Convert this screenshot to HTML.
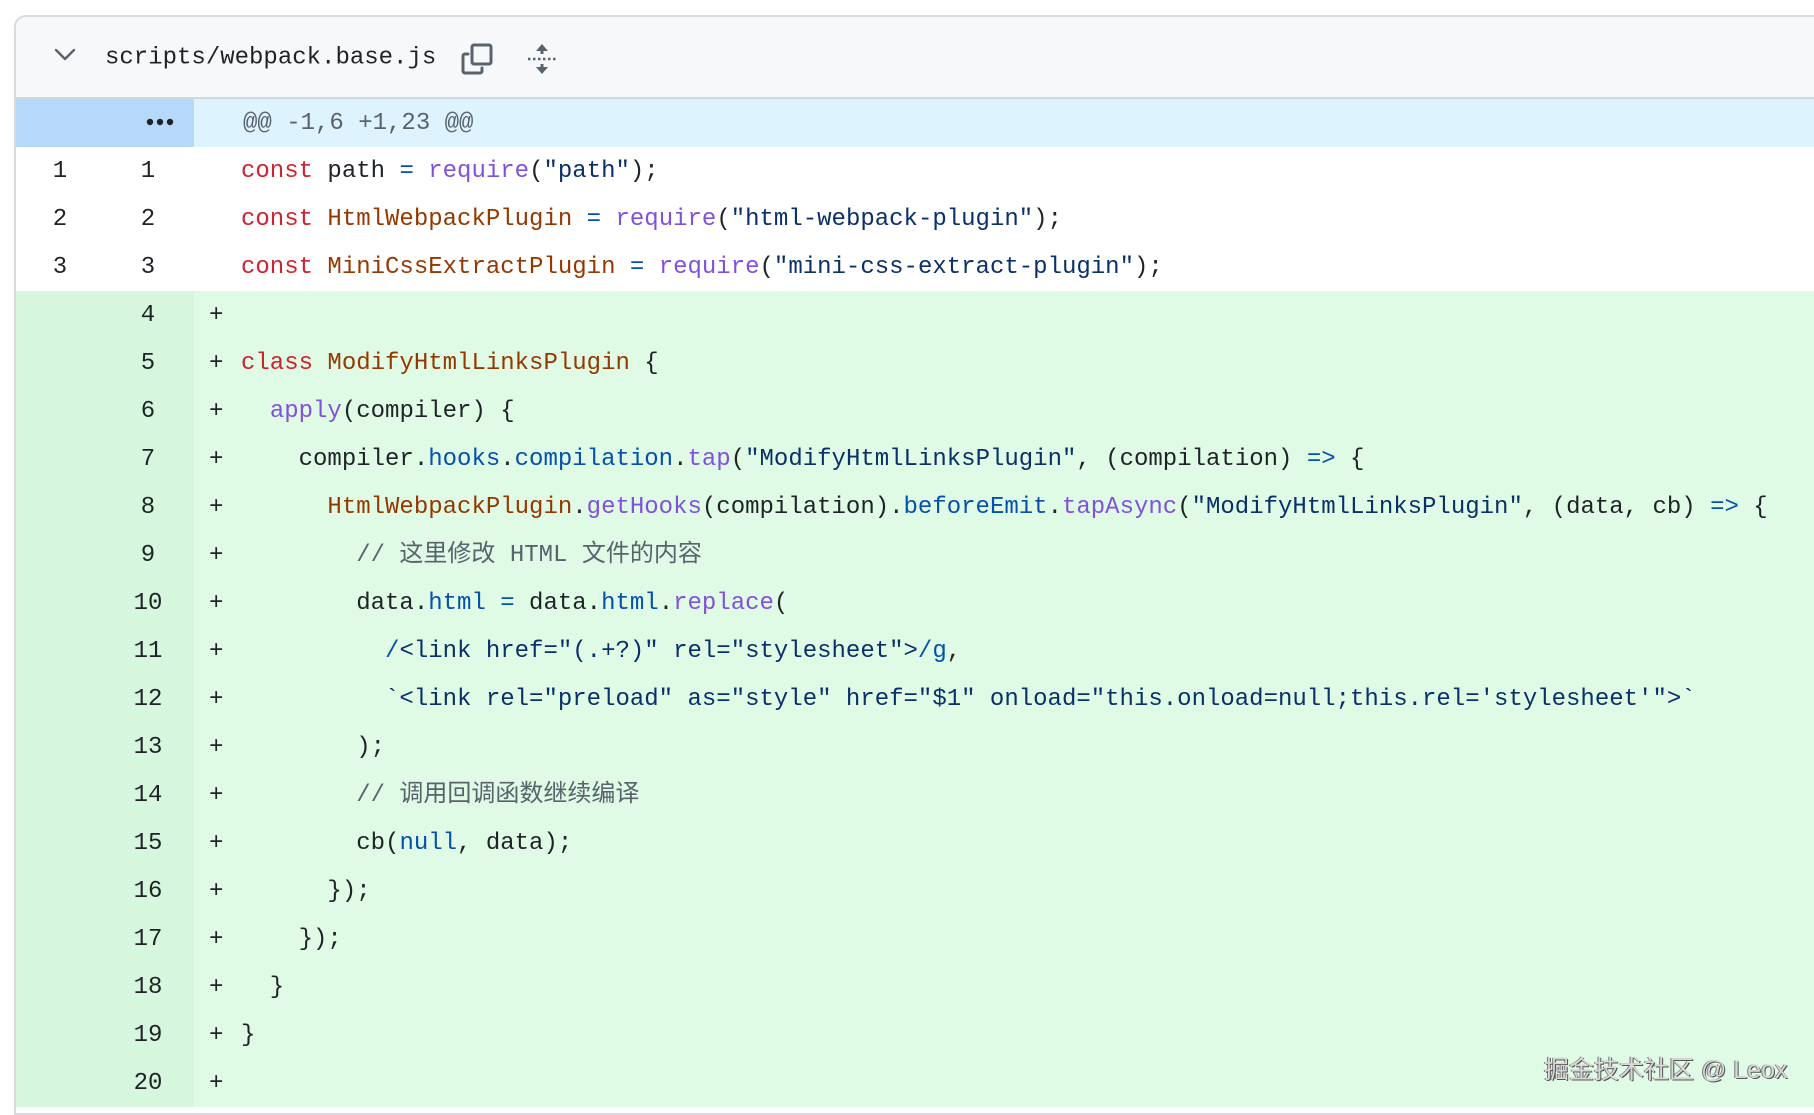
<!DOCTYPE html>
<html><head><meta charset="utf-8"><style>
*{margin:0;padding:0;box-sizing:border-box}
body{width:1814px;height:1110px;background:#fff;position:relative;overflow:hidden;font-family:"Liberation Mono","Noto Sans CJK SC",monospace;color:#1f2328}
.card{position:absolute;left:14px;top:15px;width:1820px;height:1100px;border:2px solid #d8dadd;border-radius:12px 0 0 0;overflow:hidden;background:#fff}
.hdr{position:absolute;left:0;top:0;right:0;height:82px;background:#f6f8fa;border-bottom:2px solid #d0d7de}
.fn{position:absolute;left:89px;top:41px;transform:translateY(-50%);font-size:24px;color:#1f2328;white-space:pre}
.row{position:absolute;left:0;right:0;height:48px;font-size:24px;line-height:50px;white-space:pre}
.g1,.g2{position:absolute;top:0;height:48px;text-align:center;color:#1f2328}
.g1{left:0;width:88px}
.g2{left:78px;width:108px}
.add .g2{left:78px;width:108px}
.code{position:absolute;left:178px;top:0;right:0;height:48px;padding-left:47px}
.pl{position:absolute;left:193px;top:0}
.add{background:#dffbe5}
.add .g1{background:#d6f7dd;width:78px}
.add .g2{background:#d6f7dd;width:100px}
.add .g2 span{position:relative;left:4px}
.k{color:#cf222e}.c{color:#953800}.f{color:#8250df}.p{color:#0550ae}.s{color:#0a3069}.m{color:#59636e}
.wm{position:absolute;left:1544px;top:1050px;font-family:"Liberation Sans","Noto Sans CJK SC",sans-serif;font-size:25px;color:#d8d8d8;text-shadow:1px 1px 0 #555,-1px 0 0 #777;white-space:pre}
</style></head><body>
<div class="card">
<div class="hdr">
<svg style="position:absolute;left:38px;top:30px" width="22" height="16" viewBox="0 0 22 16"><path d="M2 3l9 9 9-9" fill="none" stroke="#59636e" stroke-width="2.4" stroke-linecap="round" stroke-linejoin="round"/></svg>
<div class="fn">scripts/webpack.base.js</div>
<svg style="position:absolute;left:444px;top:25px" width="34" height="34" viewBox="0 0 34 34"><path d="M8 12H5a2 2 0 0 0-2 2v15a2 2 0 0 0 2 2h15a2 2 0 0 0 2-2v-3" fill="none" stroke="#59636e" stroke-width="3" stroke-linecap="round"/><rect x="12" y="3" width="19" height="19" rx="2" fill="none" stroke="#59636e" stroke-width="3"/></svg>
<svg style="position:absolute;left:510px;top:25px" width="32" height="34" viewBox="0 0 32 34"><path d="M16 2l-6 7h12z M16 32l-6-7h12z" fill="#59636e"/><path d="M16 8v4M16 22v4" stroke="#59636e" stroke-width="3"/><path d="M2 17h28" stroke="#59636e" stroke-width="2.4" stroke-dasharray="2.5 2.5"/></svg>
</div>
<div class="row" style="top:82px;background:#ddf4ff">
<div class="g1" style="background:#b6d9fb;width:178px"></div>
<svg style="position:absolute;left:129px;top:18px" width="32" height="10"><circle cx="5" cy="5" r="3.2" fill="#1f2328"/><circle cx="15" cy="5" r="3.2" fill="#1f2328"/><circle cx="25" cy="5" r="3.2" fill="#1f2328"/></svg>
<div class="code" style="color:#59636e;padding-left:49px">@@ -1,6 +1,23 @@</div>
</div>
<div class="row" style="top:130px"><div class="g1">1</div><div class="g2">1</div><div class="code"><span class="k">const</span> path <span class="p">=</span> <span class="f">require</span>(<span class="s">"path"</span>);</div></div>
<div class="row" style="top:178px"><div class="g1">2</div><div class="g2">2</div><div class="code"><span class="k">const</span> <span class="c">HtmlWebpackPlugin</span> <span class="p">=</span> <span class="f">require</span>(<span class="s">"html-webpack-plugin"</span>);</div></div>
<div class="row" style="top:226px"><div class="g1">3</div><div class="g2">3</div><div class="code"><span class="k">const</span> <span class="c">MiniCssExtractPlugin</span> <span class="p">=</span> <span class="f">require</span>(<span class="s">"mini-css-extract-plugin"</span>);</div></div>
<div class="row add" style="top:274px"><div class="g1"></div><div class="g2"><span>4</span></div><div class="code"></div><span class="pl">+</span></div>
<div class="row add" style="top:322px"><div class="g1"></div><div class="g2"><span>5</span></div><div class="code"><span class="k">class</span> <span class="c">ModifyHtmlLinksPlugin</span> {</div><span class="pl">+</span></div>
<div class="row add" style="top:370px"><div class="g1"></div><div class="g2"><span>6</span></div><div class="code">  <span class="f">apply</span>(compiler) {</div><span class="pl">+</span></div>
<div class="row add" style="top:418px"><div class="g1"></div><div class="g2"><span>7</span></div><div class="code">    compiler.<span class="p">hooks</span>.<span class="p">compilation</span>.<span class="f">tap</span>(<span class="s">"ModifyHtmlLinksPlugin"</span>, (compilation) <span class="p">=&gt;</span> {</div><span class="pl">+</span></div>
<div class="row add" style="top:466px"><div class="g1"></div><div class="g2"><span>8</span></div><div class="code">      <span class="c">HtmlWebpackPlugin</span>.<span class="f">getHooks</span>(compilation).<span class="p">beforeEmit</span>.<span class="f">tapAsync</span>(<span class="s">"ModifyHtmlLinksPlugin"</span>, (data, cb) <span class="p">=&gt;</span> {</div><span class="pl">+</span></div>
<div class="row add" style="top:514px"><div class="g1"></div><div class="g2"><span>9</span></div><div class="code">        <span class="m">// 这里修改 HTML 文件的内容</span></div><span class="pl">+</span></div>
<div class="row add" style="top:562px"><div class="g1"></div><div class="g2"><span>10</span></div><div class="code">        data.<span class="p">html</span> <span class="p">=</span> data.<span class="p">html</span>.<span class="f">replace</span>(</div><span class="pl">+</span></div>
<div class="row add" style="top:610px"><div class="g1"></div><div class="g2"><span>11</span></div><div class="code">          <span class="s"><span class="p">/</span>&lt;link href="(.+?)" rel="stylesheet"&gt;<span class="p">/g</span></span>,</div><span class="pl">+</span></div>
<div class="row add" style="top:658px"><div class="g1"></div><div class="g2"><span>12</span></div><div class="code">          <span class="s">`&lt;link rel="preload" as="style" href="$1" onload="this.onload=null;this.rel='stylesheet'"&gt;`</span></div><span class="pl">+</span></div>
<div class="row add" style="top:706px"><div class="g1"></div><div class="g2"><span>13</span></div><div class="code">        );</div><span class="pl">+</span></div>
<div class="row add" style="top:754px"><div class="g1"></div><div class="g2"><span>14</span></div><div class="code">        <span class="m">// 调用回调函数继续编译</span></div><span class="pl">+</span></div>
<div class="row add" style="top:802px"><div class="g1"></div><div class="g2"><span>15</span></div><div class="code">        cb(<span class="p">null</span>, data);</div><span class="pl">+</span></div>
<div class="row add" style="top:850px"><div class="g1"></div><div class="g2"><span>16</span></div><div class="code">      });</div><span class="pl">+</span></div>
<div class="row add" style="top:898px"><div class="g1"></div><div class="g2"><span>17</span></div><div class="code">    });</div><span class="pl">+</span></div>
<div class="row add" style="top:946px"><div class="g1"></div><div class="g2"><span>18</span></div><div class="code">  }</div><span class="pl">+</span></div>
<div class="row add" style="top:994px"><div class="g1"></div><div class="g2"><span>19</span></div><div class="code">}</div><span class="pl">+</span></div>
<div class="row add" style="top:1042px"><div class="g1"></div><div class="g2"><span>20</span></div><div class="code"></div><span class="pl">+</span></div>
</div>
<div class="wm">掘金技术社区 @ Leox</div>
</body></html>
